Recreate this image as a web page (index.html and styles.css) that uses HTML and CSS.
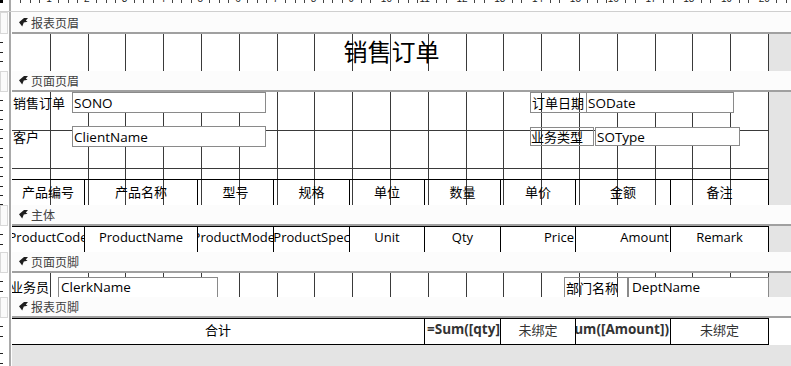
FILE: index.html
```html
<!DOCTYPE html>
<html lang="zh">
<head>
<meta charset="utf-8">
<title>销售订单 - 设计视图</title>
<link rel="stylesheet" href="styles.css">
</head>
<body>
<div class="designer">
  <div class="ruler-row">
    <div class="corner"><span class="corner-mark"></span></div>
    <div class="ruler-top">
      <span class="rt-cell"><span class="rt-num">1</span></span>
      <span class="rt-cell"><span class="rt-num">2</span></span>
      <span class="rt-cell"><span class="rt-num">3</span></span>
      <span class="rt-cell"><span class="rt-num">4</span></span>
      <span class="rt-cell"><span class="rt-num">5</span></span>
      <span class="rt-cell"><span class="rt-num">6</span></span>
      <span class="rt-cell"><span class="rt-num">7</span></span>
      <span class="rt-cell"><span class="rt-num">8</span></span>
      <span class="rt-cell"><span class="rt-num">9</span></span>
      <span class="rt-cell"><span class="rt-num">10</span></span>
      <span class="rt-cell"><span class="rt-num">11</span></span>
      <span class="rt-cell"><span class="rt-num">12</span></span>
      <span class="rt-cell"><span class="rt-num">13</span></span>
      <span class="rt-cell"><span class="rt-num">14</span></span>
      <span class="rt-cell"><span class="rt-num">15</span></span>
      <span class="rt-cell"><span class="rt-num">16</span></span>
      <span class="rt-cell"><span class="rt-num">17</span></span>
      <span class="rt-cell"><span class="rt-num">18</span></span>
      <span class="rt-cell"><span class="rt-num">19</span></span>
      <span class="rt-cell"><span class="rt-num">20</span></span>
    </div>
  </div>

  <div class="bar bar-first">
    <div class="gutter"><span class="sel-box"></span></div>
    <div class="bar-body"><svg class="bar-icon" viewBox="0 0 9 9"><path d="M0 4.2 L5 0 H9 L6.8 2.4 L8.6 3.8 L4.8 4.6 L3.2 8.6 Z"/></svg><span>报表页眉</span></div>
  </div>

  <div class="section sec-rh">
    <div class="gutter gutter-ticks"></div>
    <div class="canvas">
      <div class="vlines"><i></i><i></i><i></i><i></i><i></i><i></i><i></i><i></i><i></i><i></i><i></i><i></i><i></i><i></i><i></i><i></i><i></i><i></i><i></i><i></i></div>
      <div class="controls rh-controls"><span class="title">销售订单</span></div>
    </div>
    <div class="outside"></div>
  </div>

  <div class="bar">
    <div class="gutter"><span class="sel-box"></span></div>
    <div class="bar-body"><svg class="bar-icon" viewBox="0 0 9 9"><path d="M0 4.2 L5 0 H9 L6.8 2.4 L8.6 3.8 L4.8 4.6 L3.2 8.6 Z"/></svg><span>页面页眉</span></div>
  </div>

  <div class="section sec-ph">
    <div class="gutter gutter-ticks"></div>
    <div class="canvas">
      <div class="vlines"><i></i><i></i><i></i><i></i><i></i><i></i><i></i><i></i><i></i><i></i><i></i><i></i><i></i><i></i><i></i><i></i><i></i><i></i><i></i><i></i></div>
      <div class="hlines"><i></i><i></i></div>
      <div class="controls ph-controls">
        <div class="ph-row">
          <span class="lbl lbl-sono">销售订单</span>
          <span class="tb tb-sono">SONO</span>
          <span class="lbl boxed lbl-date">订单日期</span>
          <span class="tb tb-date">SODate</span>
        </div>
        <div class="ph-row ph-row2">
          <span class="lbl lbl-client">客户</span>
          <span class="tb tb-client">ClientName</span>
          <span class="lbl boxed lbl-type">业务类型</span>
          <span class="tb tb-type">SOType</span>
        </div>
        <div class="cells col-heads">
          <span class="cell w1">产品编号</span>
          <span class="cell w2">产品名称</span>
          <span class="cell w3">型号</span>
          <span class="cell w4">规格</span>
          <span class="cell w5">单位</span>
          <span class="cell w6">数量</span>
          <span class="cell w7">单价</span>
          <span class="cell w8">金额</span>
          <span class="cell w9">备注</span>
        </div>
      </div>
    </div>
    <div class="outside"></div>
  </div>

  <div class="bar">
    <div class="gutter"><span class="sel-box"></span></div>
    <div class="bar-body"><svg class="bar-icon" viewBox="0 0 9 9"><path d="M0 4.2 L5 0 H9 L6.8 2.4 L8.6 3.8 L4.8 4.6 L3.2 8.6 Z"/></svg><span>主体</span></div>
  </div>

  <div class="section sec-detail">
    <div class="gutter gutter-ticks"></div>
    <div class="canvas canvas-white">
      <div class="cells detail-row">
        <span class="cell w1">ProductCode</span>
        <span class="cell w2">ProductName</span>
        <span class="cell w3">ProductModel</span>
        <span class="cell w4">ProductSpec</span>
        <span class="cell w5">Unit</span>
        <span class="cell w6">Qty</span>
        <span class="cell w7 right">Price</span>
        <span class="cell w8 right">Amount</span>
        <span class="cell w9">Remark</span>
      </div>
    </div>
    <div class="outside"></div>
  </div>

  <div class="bar">
    <div class="gutter"><span class="sel-box"></span></div>
    <div class="bar-body"><svg class="bar-icon" viewBox="0 0 9 9"><path d="M0 4.2 L5 0 H9 L6.8 2.4 L8.6 3.8 L4.8 4.6 L3.2 8.6 Z"/></svg><span>页面页脚</span></div>
  </div>

  <div class="section sec-pf">
    <div class="gutter gutter-ticks"></div>
    <div class="canvas">
      <div class="vlines"><i></i><i></i><i></i><i></i><i></i><i></i><i></i><i></i><i></i><i></i><i></i><i></i><i></i><i></i><i></i><i></i><i></i><i></i><i></i><i></i></div>
      <div class="controls pf-controls">
        <span class="lbl lbl-clerk"><span class="shift">业务员</span></span>
        <span class="tb tb-clerk">ClerkName</span>
        <span class="lbl boxed lbl-dept">部门名称</span>
        <span class="tb tb-dept">DeptName</span>
      </div>
    </div>
    <div class="outside"></div>
  </div>

  <div class="bar">
    <div class="gutter"><span class="sel-box"></span></div>
    <div class="bar-body"><svg class="bar-icon" viewBox="0 0 9 9"><path d="M0 4.2 L5 0 H9 L6.8 2.4 L8.6 3.8 L4.8 4.6 L3.2 8.6 Z"/></svg><span>报表页脚</span></div>
  </div>

  <div class="section sec-rf">
    <div class="gutter gutter-ticks"></div>
    <div class="canvas canvas-white">
      <div class="cells rf-row">
        <span class="cell wsum">合计</span>
        <span class="cell w6 bold left">=Sum([qty])</span>
        <span class="cell w7 muted">未绑定</span>
        <span class="cell w8 bold right">=Sum([Amount])</span>
        <span class="cell w9 muted">未绑定</span>
      </div>
    </div>
    <div class="outside outside-white"></div>
  </div>

  <div class="tail">
    <div class="gutter gutter-ticks"></div>
    <div class="tail-fill"></div>
  </div>
</div>
</body>
</html>
```

FILE: styles.css
```css
* { box-sizing: border-box; }
html, body { margin: 0; padding: 0; }
body {
  width: 791px;
  height: 366px;
  overflow: hidden;
  background: #fff;
  font-family: "Open Sans", "Noto Sans CJK SC", sans-serif;
  font-size: 13px;
  color: #000;
}
.designer { display: flex; flex-direction: column; height: 366px; }

/* rulers */
.ruler-row { display: flex; height: 12px; flex: none; }
.corner {
  width: 12px;
  background: linear-gradient(to right, #fff 0 9px, #a9a9a9 9px 11px, #fff 11px);
  border-bottom: 1px solid #cfcfcf;
}
.corner-mark { display: block; width: 3px; height: 3px; background: #000; }
.ruler-top {
  flex: 1;
  display: flex;
  overflow: hidden;
  border-bottom: 1px solid #cfcfcf;
  background: repeating-linear-gradient(to right, transparent 0 8.45px, #444 8.45px 9.45px) 0 0 / 100% 3px no-repeat, #fff;
}
.rt-cell { flex: 0 0 37.8px; display: flex; justify-content: flex-end; align-items: flex-start; }
.rt-num {
  font-family: "Liberation Sans", sans-serif;
  font-size: 10px;
  line-height: 10px;
  margin-top: -6px;
  margin-right: -3px;
  padding: 0 1px;
  background: #fff;
  color: #222;
}

.gutter {
  flex: none;
  width: 12px;
  background: linear-gradient(to right, #fff 0 9px, #a9a9a9 9px 11px, #fff 11px);
}
.gutter-ticks {
  background:
    repeating-linear-gradient(to bottom, transparent 0 8.45px, #222 8.45px 9.45px) 0 0 / 3px 100% no-repeat,
    linear-gradient(to right, #fff 0 9px, #a9a9a9 9px 11px, #fff 11px);
}
.sel-box { display: block; width: 8px; height: 100%; border: 1px solid #d8d8d8; background: #fafafa; }

/* section bars */
.bar { display: flex; height: 21px; flex: none; }
.bar-first { height: 22px; }
.bar-body {
  flex: 1;
  display: flex;
  align-items: center;
  gap: 3px;
  padding-left: 7px;
  background: #fcfcfc;
  border-bottom: 2px solid #a0a0a0;
  font-family: "Noto Sans CJK SC", sans-serif;
  font-size: 12px;
  color: #404040;
}
.bar-icon { width: 9px; height: 9px; fill: #1e1e1e; flex: none; }

/* sections */
.section { display: flex; flex: none; overflow: hidden; }
.sec-rh { height: 37px; }
.sec-ph { height: 113px; }
.sec-detail { height: 26px; }
.sec-pf { height: 24px; }
.sec-rf { height: 27px; }
.canvas {
  flex: 0 0 757px;
  display: grid;
  grid-template: 1fr / 1fr;
  background: #fff;
  overflow: hidden;
}
.canvas > * { grid-area: 1 / 1; min-width: 0; min-height: 0; }
.outside { flex: 1; background: #e4e4e4; }
.outside-white { background: #fff; }

.vlines { display: flex; padding-left: 1px; }
.vlines i { flex: 0 0 37.8px; border-right: 1px solid #3a3a3a; }
.hlines { display: flex; flex-direction: column; padding-top: 1px; }
.hlines i { flex: 0 0 37.8px; border-bottom: 1px solid #3a3a3a; }

.controls { display: flex; }

/* report header */
.rh-controls { justify-content: center; align-items: center; }
.title {
  font-family: "Noto Sans CJK SC", sans-serif;
  font-size: 24px;
  line-height: 28px;
  margin-top: -3px;
  margin-left: 2px;
  color: #000;
}

/* labels / textboxes */
.lbl {
  font-family: "Noto Sans CJK SC", sans-serif;
  font-size: 13px;
  display: flex;
  align-items: center;
  white-space: nowrap;
  overflow: hidden;
  padding-left: 1px;
}
.boxed { border: 1px solid #8a8a8a; }
.tb {
  background: #fff;
  border: 1px solid #8a8a8a;
  display: flex;
  align-items: center;
  padding-left: 1px;
  white-space: nowrap;
  overflow: hidden;
  font-size: 13.5px;
}

.ph-controls { flex-direction: column; }
.ph-row { display: flex; height: 21px; flex: none; align-items: flex-start; }
.ph-row2 { margin-top: 13px; }
.lbl-sono, .lbl-client { width: 60px; height: 21px; }
.tb-sono, .tb-client { width: 194px; height: 21px; }
.lbl-date { margin-left: 264px; width: 57px; height: 21px; }
.tb-date { width: 148px; height: 21px; margin-left: -1px; }
.lbl-type { margin-left: 264px; margin-top: 1px; width: 64px; height: 19px; padding-left: 0; }
.tb-type { margin-left: 1px; margin-top: 1px; width: 145px; height: 19px; }

/* table-like rows */
.cells { display: flex; flex: none; border-top: 1px solid #000; }
.cell {
  display: flex;
  justify-content: center;
  align-items: center;
  white-space: nowrap;
  overflow: hidden;
  border-right: 1px solid #000;
  flex: none;
}
.cell.right { justify-content: flex-end; padding-right: 1px; }
.cell.left { justify-content: flex-start; padding-left: 2px; }
.w1 { width: 73px; }
.w2 { width: 113px; }
.w3 { width: 76px; }
.w4 { width: 76px; }
.w5 { width: 75px; }
.w6 { width: 76px; }
.w7 { width: 75px; }
.w8 { width: 95px; }
.w9 { width: 98px; }
.wsum { width: 413px; font-family: "Noto Sans CJK SC", sans-serif; }

.col-heads {
  margin-top: 32px;
  height: 26px;
  font-family: "Noto Sans CJK SC", sans-serif;
  font-size: 13px;
}
.col-heads .cell { align-items: flex-start; padding-top: 2px; }

.canvas-white { display: flex; flex-direction: column; }
.detail-row { height: 26px; }
.detail-row .cell { padding-bottom: 5px; }

/* page footer */
.pf-controls { align-items: flex-start; padding-top: 4px; }
.lbl-clerk { width: 46px; height: 20px; padding-left: 0; padding-bottom: 1px; }
.shift { margin-left: -2px; }
.tb-clerk { width: 160px; height: 22px; padding-left: 2px; padding-bottom: 2px; }
.lbl-dept { margin-left: 346px; width: 63px; height: 22px; border-right: none; padding-left: 1px; padding-bottom: 2px; }
.tb-dept { width: 142px; height: 22px; border-left: 2px solid #8a8a8a; padding-left: 3px; padding-bottom: 2px; }

/* report footer */
.rf-row { height: 27px; border-bottom: 1px solid #000; }
.rf-row .cell { padding-bottom: 5px; }
.bold { font-weight: 700; color: #333; font-size: 13.5px; }
.muted { color: #333; font-family: "Noto Sans CJK SC", sans-serif; }

.tail { flex: 1; display: flex; }
.tail-fill { flex: 1; background: #e4e4e4; }
```
